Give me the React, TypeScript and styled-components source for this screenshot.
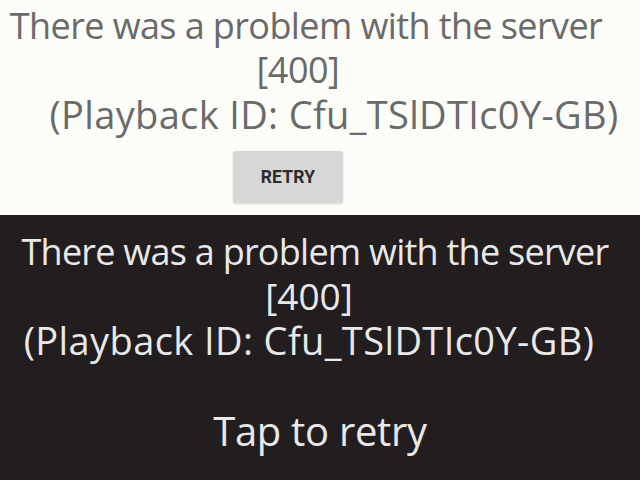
import React from "react";
import styled, { createGlobalStyle } from "styled-components";

const Global = createGlobalStyle`
  html, body { margin: 0; padding: 0; width: 640px; height: 480px; overflow: hidden; }
  body { font-family: "Open Sans", "Noto Sans", sans-serif; }
`;

const Page = styled.div`
  width: 640px;
  height: 480px;
  display: flex;
  flex-direction: column;
`;

const LightPanel = styled.section`
  height: 215px;
  background: #fcfcf8;
  display: flex;
  flex-direction: column;
  box-sizing: border-box;
  padding-top: 4px;
`;

const DarkPanel = styled.section`
  flex: 1;
  background: #221e20;
  display: flex;
  flex-direction: column;
  box-sizing: border-box;
  padding-top: 15px;
`;

const Line = styled.div<{ $color: string; $shift: number; $size: number; $track: number }>`
  font-size: ${(p) => p.$size}px;
  letter-spacing: ${(p) => p.$track}px;
  line-height: 44px;
  color: ${(p) => p.$color};
  text-align: center;
  white-space: nowrap;
  transform: translateX(${(p) => p.$shift}px);
`;

const TapLine = styled(Line)`
  margin-top: 47px;
`;

const ButtonRow = styled.div`
  display: flex;
  justify-content: center;
  padding-right: 64px;
  margin-top: 15px;
`;

const RetryButton = styled.button`
  width: 110px;
  height: 52px;
  border: none;
  border-radius: 3px;
  background: #d7d7d7;
  box-shadow: 0 1px 2px rgba(0, 0, 0, 0.15);
  font-family: Roboto, "Noto Sans", sans-serif;
  font-weight: 700;
  font-size: 17.5px;
  letter-spacing: 0.2px;
  color: #2c2c2c;
`;

const LIGHT = "#6a6a6a";
const DARK = "#e8e8e8";

export default function App() {
  return (
    <Page>
      <Global />
      <LightPanel>
        <Line $color={LIGHT} $shift={-14} $size={36} $track={-0.6}>
          There was a problem with the server
        </Line>
        <Line $color={LIGHT} $shift={-22} $size={36} $track={-0.5}>
          [400]
        </Line>
        <Line $color={LIGHT} $shift={14} $size={38} $track={0.35}>
          (Playback ID: Cfu_TSlDTIc0Y-GB)
        </Line>
        <ButtonRow>
          <RetryButton>RETRY</RetryButton>
        </ButtonRow>
      </LightPanel>
      <DarkPanel>
        <Line $color={DARK} $shift={-5} $size={36} $track={-0.75}>
          There was a problem with the server
        </Line>
        <Line $color={DARK} $shift={-11} $size={37} $track={0}>
          [400]
        </Line>
        <Line $color={DARK} $shift={-11} $size={38} $track={0.4}>
          (Playback ID: Cfu_TSlDTIc0Y-GB)
        </Line>
        <TapLine $color={DARK} $shift={0} $size={40} $track={-0.3}>
          Tap to retry
        </TapLine>
      </DarkPanel>
    </Page>
  );
}
